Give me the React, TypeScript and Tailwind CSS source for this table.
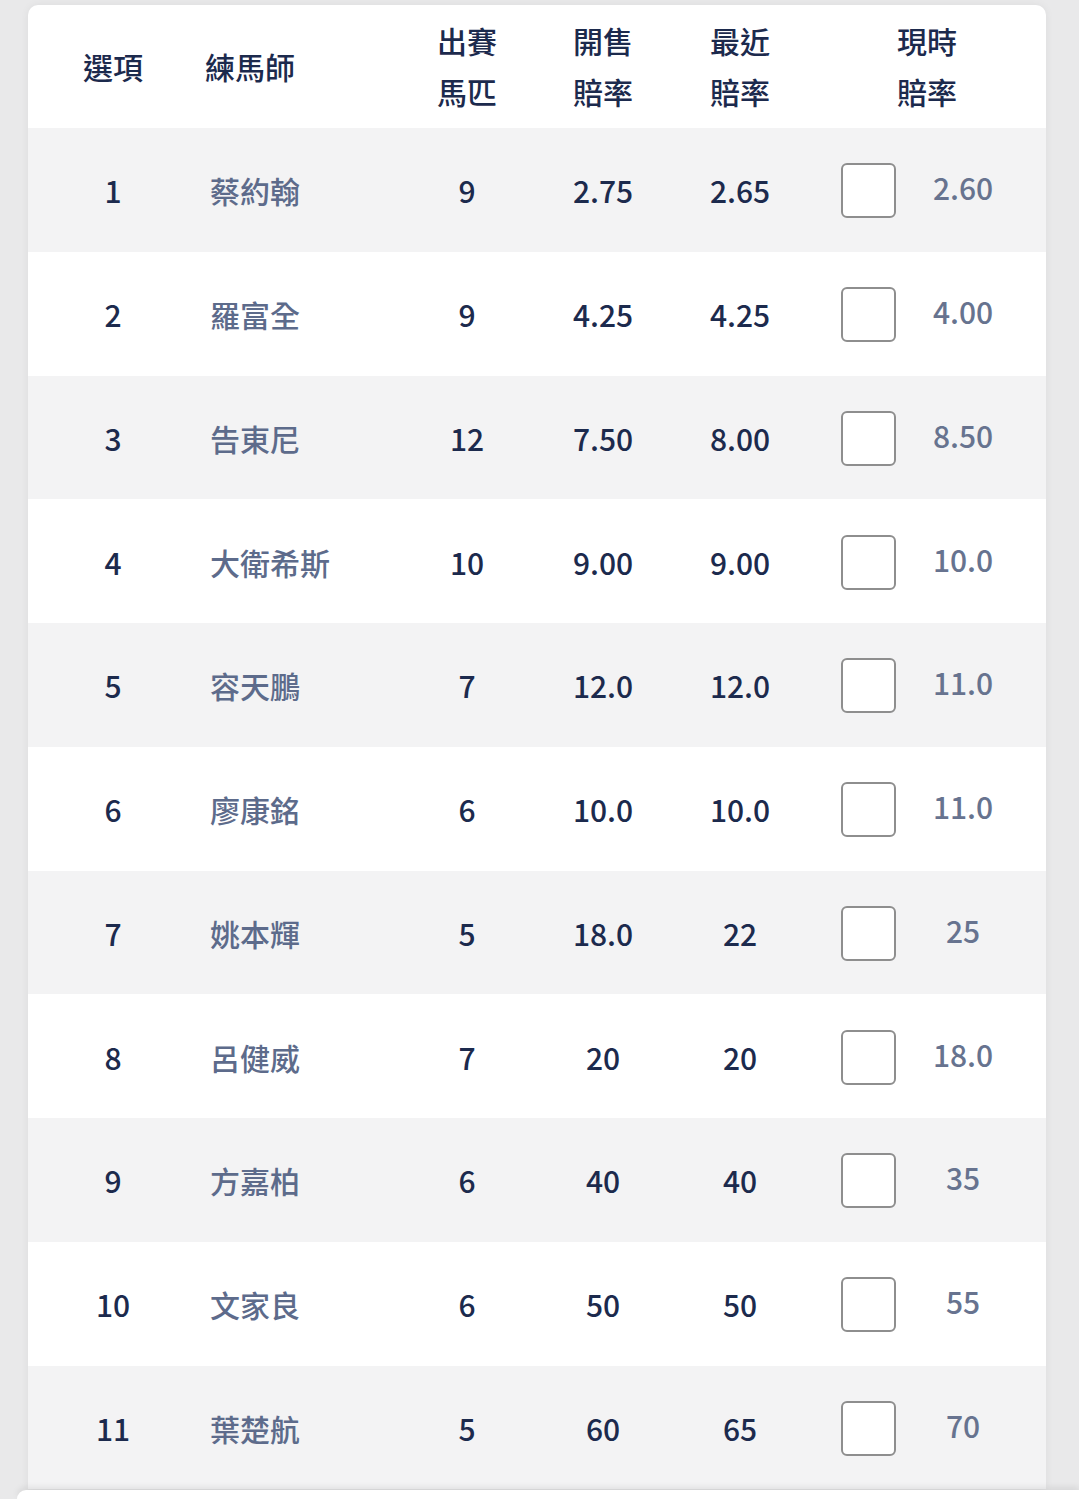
import React from 'react';

interface Row {
  no: number;
  trainer: string;
  runners: number;
  opening: string;
  latest: string;
  current: string;
}

const rows: Row[] = [
  { no: 1, trainer: '蔡約翰', runners: 9, opening: '2.75', latest: '2.65', current: '2.60' },
  { no: 2, trainer: '羅富全', runners: 9, opening: '4.25', latest: '4.25', current: '4.00' },
  { no: 3, trainer: '告東尼', runners: 12, opening: '7.50', latest: '8.00', current: '8.50' },
  { no: 4, trainer: '大衛希斯', runners: 10, opening: '9.00', latest: '9.00', current: '10.0' },
  { no: 5, trainer: '容天鵬', runners: 7, opening: '12.0', latest: '12.0', current: '11.0' },
  { no: 6, trainer: '廖康銘', runners: 6, opening: '10.0', latest: '10.0', current: '11.0' },
  { no: 7, trainer: '姚本輝', runners: 5, opening: '18.0', latest: '22', current: '25' },
  { no: 8, trainer: '呂健威', runners: 7, opening: '20', latest: '20', current: '18.0' },
  { no: 9, trainer: '方嘉柏', runners: 6, opening: '40', latest: '40', current: '35' },
  { no: 10, trainer: '文家良', runners: 6, opening: '50', latest: '50', current: '55' },
  { no: 11, trainer: '葉楚航', runners: 5, opening: '60', latest: '65', current: '70' },
];

function HeaderCell({ lines, className }: { lines: string[]; className: string }) {
  return (
    <div className={`flex flex-col justify-center text-center leading-[51px] ${className}`}>
      {lines.map((l, i) => (
        <span key={i}>{l}</span>
      ))}
    </div>
  );
}

function OddsRow({ row, index }: { row: Row; index: number }) {
  return (
    <div className={`flex h-[123.75px] items-center ${index % 2 === 0 ? 'bg-[#f3f3f4]' : 'bg-white'}`}>
      <div className="w-[170px] translate-y-[1px] text-center font-medium text-[#1c2a4d]">{row.no}</div>
      <div className="w-[202px] translate-y-[1px] pl-[12px] font-medium text-[#5d6b8b]">{row.trainer}</div>
      <div className="w-[134px] translate-y-[1px] text-center font-medium text-[#1c2a4d]">{row.runners}</div>
      <div className="w-[138px] translate-y-[1px] text-center font-medium text-[#1c2a4d]">{row.opening}</div>
      <div className="w-[136px] translate-y-[1px] text-center font-medium text-[#1c2a4d]">{row.latest}</div>
      <div className="flex w-[238px] items-center pl-[33px]">
        <div className="h-[55px] w-[55px] translate-y-[1px] rounded-[6px] border-2 border-[#8e8e8e] bg-white" />
        <div className="ml-[12px] w-[110px] -translate-y-[2px] text-center font-medium text-[#67738f]">{row.current}</div>
      </div>
    </div>
  );
}

export default function App() {
  return (
    <div
      className="relative h-[1499px] overflow-hidden bg-[#e9e9ea] pt-[5px] text-[30px]"
      style={{ fontFamily: '"Noto Sans CJK TC", "Noto Sans", sans-serif' }}
    >
      <div className="ml-[28px] w-[1018px] overflow-hidden rounded-t-[10px] bg-white shadow-[0_0_8px_rgba(0,0,0,0.06)]">
        <div className="flex h-[123px] items-center font-medium text-[#1c2a4d]">
          <HeaderCell lines={['選項']} className="w-[170px]" />
          <div className="w-[202px] pl-[7px] text-left">練馬師</div>
          <HeaderCell lines={['出賽', '馬匹']} className="w-[134px] -translate-y-[1px]" />
          <HeaderCell lines={['開售', '賠率']} className="w-[138px] -translate-y-[1px]" />
          <HeaderCell lines={['最近', '賠率']} className="w-[136px] -translate-y-[1px]" />
          <HeaderCell lines={['現時', '賠率']} className="w-[238px] -translate-y-[1px]" />
        </div>
        {rows.map((row, i) => (
          <OddsRow key={row.no} row={row} index={i} />
        ))}
      </div>
      <div className="absolute bottom-0 left-[17px] right-0 h-[9px] rounded-tl-[12px] bg-white shadow-[0_-3px_6px_rgba(0,0,0,0.08)]" />
    </div>
  );
}
